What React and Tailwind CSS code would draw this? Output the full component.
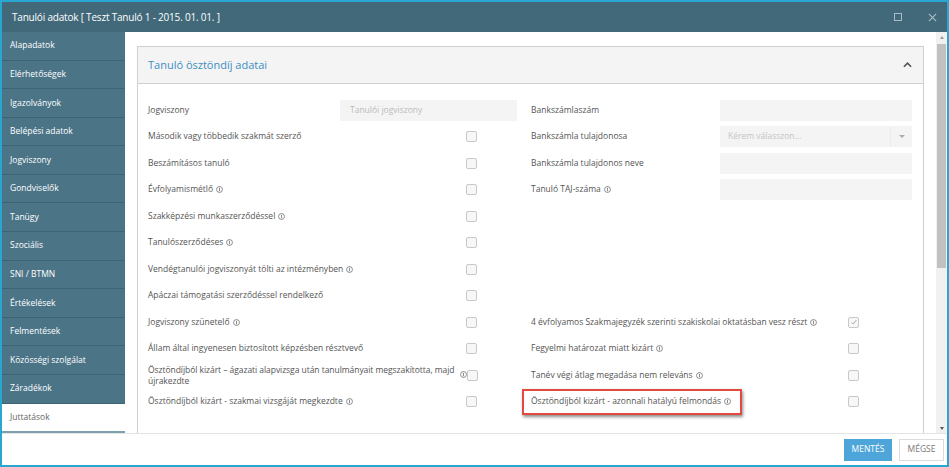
import React from 'react';

const menu = [
  'Alapadatok',
  'Elérhetőségek',
  'Igazolványok',
  'Belépési adatok',
  'Jogviszony',
  'Gondviselők',
  'Tanügy',
  'Szociális',
  'SNI / BTMN',
  'Értékelések',
  'Felmentések',
  'Közösségi szolgálat',
  'Záradékok',
  'Juttatások',
];

const Info = ({ tight }) => (
  <svg className={(tight ? 'ml-[1px] ' : 'ml-[3px] ') + 'inline-block shrink-0 w-[7px] h-[7px] -mt-[1px] align-middle text-[#777]'} viewBox="0 0 10 10" fill="none" stroke="currentColor" strokeWidth="1.2">
    <circle cx="5" cy="5" r="4.2" />
    <path d="M5 2.5v5" />
  </svg>
);

const Check = ({ checked }) => (
  <div className="w-[11px] h-[11px] rounded-[2px] border border-[#c8c8c8] bg-[#f7f7f7] flex items-center justify-center">
    {checked && (
      <svg className="w-[8px] h-[8px] text-[#aaa]" viewBox="0 0 10 10" fill="none" stroke="currentColor" strokeWidth="1.2">
        <path d="M2 5.5l2 2 4-5" />
      </svg>
    )}
  </div>
);

const leftRows = [
  { label: 'Jogviszony', input: 'Tanulói jogviszony' },
  { label: 'Második vagy többedik szakmát szerző', check: true },
  { label: 'Beszámításos tanuló', check: true },
  { label: 'Évfolyamismétlő', info: true, check: true },
  { label: 'Szakképzési munkaszerződéssel', info: true, check: true },
  { label: 'Tanulószerződéses', info: true, check: true },
  { label: 'Vendégtanulói jogviszonyát tölti az intézményben', info: true, check: true },
  { label: 'Apáczai támogatási szerződéssel rendelkező', check: true },
  { label: 'Jogviszony szünetelő', info: true, check: true },
  { label: 'Állam által ingyenesen biztosított képzésben résztvevő', check: true },
  { label: 'Ösztöndíjból kizárt – ágazati alapvizsga után tanulmányait megszakította, majd újrakezdte', info: true, check: true, wrap: true },
  { label: 'Ösztöndíjból kizárt - szakmai vizsgáját megkezdte', info: true, check: true },
];

const rightRows = [
  { label: 'Bankszámlaszám', input: '' },
  { label: 'Bankszámla tulajdonosa', select: 'Kérem válasszon...' },
  { label: 'Bankszámla tulajdonos neve', input: '' },
  { label: 'Tanuló TAJ-száma', info: true, input: '' },
  {},
  {},
  {},
  {},
  { label: '4 évfolyamos Szakmajegyzék szerinti szakiskolai oktatásban vesz részt', info: true, check: true, checked: true },
  { label: 'Fegyelmi határozat miatt kizárt', info: true, check: true },
  { label: 'Tanév végi átlag megadása nem releváns', info: true, check: true },
  { label: 'Ösztöndíjból kizárt - azonnali hatályú felmondás', info: true, check: true, marked: true },
];

export default function App() {
  return (
    <div className="w-[949px] h-[467px] border-2 border-[#2aa7d1] flex flex-col bg-white overflow-hidden text-[#555]" style={{ fontFamily: '"Open Sans", sans-serif' }}>
      {/* title bar */}
      <div className="h-[30px] shrink-0 bg-[#41697a] flex items-center pl-[10px] pr-[10px]">
        <span className="text-white text-[10px] tracking-[-0.2px] flex-1">Tanulói adatok [ Teszt Tanuló 1 - 2015. 01. 01. ]</span>
        <div className="w-[8px] h-[8px] border-[1.5px] border-[#a9bcc5] mr-[26px]" />
        <svg className="w-[9px] h-[9px] text-[#a9bcc5]" viewBox="0 0 10 10" stroke="currentColor" strokeWidth="1.3">
          <path d="M1 1l8 8M9 1l-8 8" />
        </svg>
      </div>

      {/* body */}
      <div className="flex-1 flex min-h-0">
        <div className="w-[123px] shrink-0 flex flex-col bg-[#4b7487]">
          {menu.map((m, i) =>
            i === menu.length - 1 ? (
              <div key={m} className="flex-1 flex items-center pl-[8px] bg-white text-[#666] text-[8.5px] border-b-2 border-[#7e9fb0]">
                {m}
              </div>
            ) : (
              <div key={m} className="flex-1 flex items-center pl-[8px] text-white text-[8.5px] border-b border-[#3e6373]">
                {m}
              </div>
            )
          )}
        </div>

        <div className="flex-1 flex min-w-0">
          <div className="flex-1 pl-[12px] pr-[12px] pt-[14px] overflow-hidden">
            <div className="border border-[#cfcfcf] border-b-0 h-full">
              <div className="h-[37px] bg-[#f4f4f4] border-b border-[#cfcfcf] flex items-center pl-[10px] pr-[11px]">
                <span className="flex-1 text-[11px] text-[#3b8ec2]">Tanuló ösztöndíj adatai</span>
                <svg className="w-[9px] h-[6px] text-[#555]" viewBox="0 0 10 6" fill="none" stroke="currentColor" strokeWidth="1.8">
                  <path d="M1 5l4-4 4 4" />
                </svg>
              </div>
              <div className="flex pl-[10px] pr-[11px] pt-[13px] gap-[14px]">
                {/* left column */}
                <div className="w-[369px] flex flex-col">
                  {leftRows.map((r, i) => (
                    <div key={i} className="h-[26.5px] flex items-center text-[8.5px]">
                      <div className={r.wrap ? 'flex-1 leading-[11px] tracking-[-0.05px]' : 'flex-1'}>
                        {r.label}
                        {r.info && !r.wrap && <Info />}
                      </div>
                      {r.wrap && <Info tight />}
                      {r.input !== undefined && (
                        <div className="w-[177px] h-[21px] bg-[#f4f4f4] flex items-center pl-[10px] text-[#bbb]">{r.input}</div>
                      )}
                      {r.check && (
                        <div className={r.wrap ? 'w-[50px] flex' : 'w-[51px] flex'}>
                          <Check />
                        </div>
                      )}
                    </div>
                  ))}
                </div>

                {/* right column */}
                <div className="flex-1 flex flex-col">
                  {rightRows.map((r, i) => (
                    <div key={i} className="h-[26.5px] flex items-center text-[8.5px]">
                      <div className="flex-1">
                        {r.marked ? (
                          <div className="inline-flex items-center h-[26px] w-[220px] -ml-[9px] pl-[7px] border-2 border-[#e2493f] shadow-[1px_2px_3px_rgba(0,0,0,0.45)]">
                            {r.label}
                            <Info />
                          </div>
                        ) : (
                          <>
                            {r.label}
                            {r.info && <Info />}
                          </>
                        )}
                      </div>
                      {r.input !== undefined && <div className="w-[192px] h-[21px] bg-[#f4f4f4]" />}
                      {r.select && (
                        <div className="w-[192px] h-[21px] bg-[#f4f4f4] flex items-center pl-[8px] text-[#c4c4c4]">
                          <span className="flex-1">{r.select}</span>
                          <div className="w-[22px] h-full border-l border-[#ececec] flex items-center justify-center">
                            <div className="w-0 h-0 border-l-[3px] border-r-[3px] border-t-[3px] border-l-transparent border-r-transparent border-t-[#aaa]" />
                          </div>
                        </div>
                      )}
                      {r.check && (
                        <div className="w-[64px] flex">
                          <Check checked={r.checked} />
                        </div>
                      )}
                    </div>
                  ))}
                </div>
              </div>
            </div>
          </div>

          {/* scrollbar */}
          <div className="w-[11px] shrink-0 bg-[#f1f1f1] flex flex-col items-center">
            <div className="h-[10px] flex items-center">
              <div className="w-0 h-0 border-l-[2.5px] border-r-[2.5px] border-b-[3px] border-l-transparent border-r-transparent border-b-[#999]" />
            </div>
            <div className="w-[9px] h-[224px] bg-[#c1c1c1] mt-[2px]" />
            <div className="flex-1" />
            <div className="h-[10px] flex items-center">
              <div className="w-0 h-0 border-l-[2.5px] border-r-[2.5px] border-t-[3px] border-l-transparent border-r-transparent border-t-[#555]" />
            </div>
          </div>
        </div>
      </div>

      {/* footer */}
      <div className="h-[32px] shrink-0 border-t border-[#e4e4e4] flex items-center justify-end gap-[7px] pr-[3px]">
        <div className="w-[48px] h-[22px] bg-[#4ea5d9] text-white text-[8.5px] flex items-center justify-center">MENTÉS</div>
        <div className="w-[45px] h-[22px] border border-[#dcdcdc] text-[#777] text-[8.5px] flex items-center justify-center">MÉGSE</div>
      </div>
    </div>
  );
}
